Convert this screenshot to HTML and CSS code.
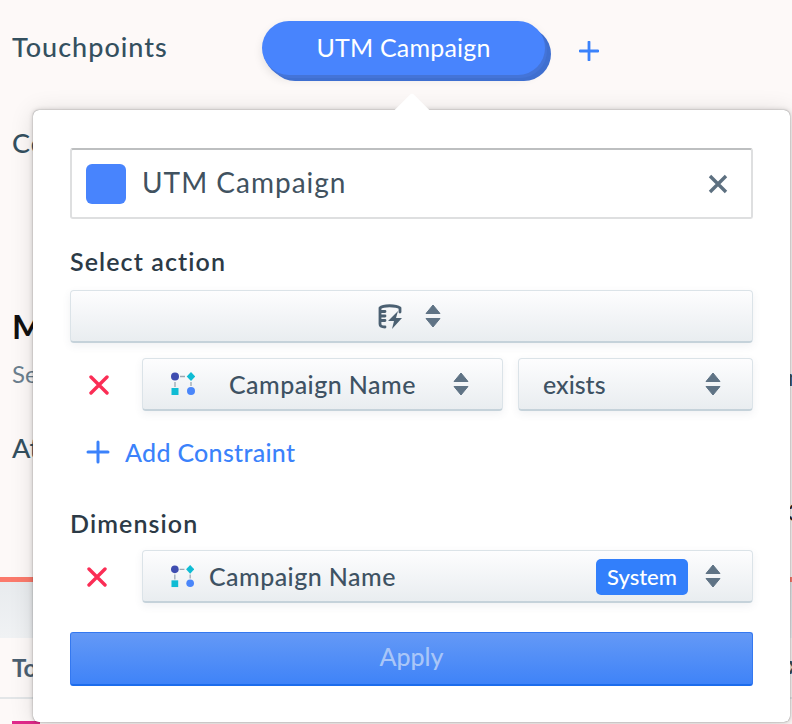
FILE: index.html
```html
<!DOCTYPE html>
<html lang="en">
    <head>
        <meta charset="UTF-8">
        <title>Touchpoints</title>
        <link rel="stylesheet" href="styles.css">
    </head>
    <body>
        <div class="page">
            <div class="top-row">
                <div class="row-label">Touchpoints</div>
                <div class="pill">UTM Campaign</div>
                <svg class="pill-plus" width="20" height="20" viewBox="0 0 20 20"><path d="M10 1v18M1 10h18" stroke="#3b82fb" stroke-width="2.8" stroke-linecap="round"/></svg>
            </div>

            <div class="back-text back-c">Co</div>
            <div class="back-text back-m">Me</div>
            <div class="back-text back-s">Se</div>
            <div class="back-text back-a">At</div>
            <div class="back-band"></div>
            <div class="back-text back-t">To</div>
            <div class="back-line"></div>
            <div class="back-pink"></div>
            <div class="back-text back-r1">n</div>
            <div class="back-text back-r2">3</div>
            <div class="back-text back-r3">x</div>
        </div>

        <div class="popover">
            <div class="popover-arrow"></div>

            <div class="name-box">
                <span class="swatch"></span>
                <span class="name-text">UTM Campaign</span>
                <svg class="name-close" width="20" height="20" viewBox="0 0 20 20"><path d="M2 2l16 16M18 2L2 18" stroke="#5d7080" stroke-width="3.400"/></svg>
            </div>

            <div class="section-title first">Select action</div>
            <div class="select select-center">
                <svg class="db-icon" width="24" height="25" viewBox="0 0 24 25" fill="none">
                    <path d="M2 4c3-3 16-3 20 0M2 4v16c0 2 2 3 5 3M7 7.500H2M7 12H2M7 16.500H2M22 4v4" stroke="#4b6072" stroke-width="2.800" stroke-linecap="round"/>
                    <path d="M20 7l-10 10h6l-2 8 10-11h-6l2-7z" fill="#4b6072"/>
                </svg>
                <svg class="updown" width="16" height="24" viewBox="0 0 16 24"><path d="M8 1l7 8.500H1zM1 14.500h14L8 23z" fill="#5f7385" stroke="#5f7385" stroke-linejoin="round"/></svg>
            </div>

            <div class="constraint-row">
                <span class="remove"><svg width="20" height="20" viewBox="0 0 20 20"><path d="M2 2l16 16M18 2L2 18" stroke="#fb2d55" stroke-width="3.400" stroke-linecap="round"/></svg></span>
                <div class="select field-select">
                    <svg class="node-icon" width="24" height="24" viewBox="0 0 24 24"><use href="#nodes"/></svg>
                    <span class="select-text wide-gap">Campaign Name</span>
                    <svg class="updown" width="16" height="24" viewBox="0 0 16 24"><path d="M8 1l7 8.500H1zM1 14.500h14L8 23z" fill="#5f7385" stroke="#5f7385" stroke-linejoin="round"/></svg>
                </div>
                <div class="select op-select">
                    <span class="select-text">exists</span>
                    <svg class="updown" width="16" height="24" viewBox="0 0 16 24"><path d="M8 1l7 8.500H1zM1 14.500h14L8 23z" fill="#5f7385" stroke="#5f7385" stroke-linejoin="round"/></svg>
                </div>
            </div>

            <div class="add-row">
                <svg width="24" height="24" viewBox="0 0 24 24"><path d="M12 2v20M2 12h20" stroke="#3b82fb" stroke-width="3" stroke-linecap="round"/></svg>
                <span>Add Constraint</span>
            </div>

            <div class="section-title">Dimension</div>
            <div class="constraint-row dimension-row">
                <span class="remove"><svg width="20" height="20" viewBox="0 0 20 20"><path d="M2 2l16 16M18 2L2 18" stroke="#fb2d55" stroke-width="3.400" stroke-linecap="round"/></svg></span>
                <div class="select dim-select">
                    <svg class="node-icon" width="23" height="23" viewBox="0 0 24 24"><use href="#nodes"/></svg>
                    <span class="select-text">Campaign Name</span>
                    <span class="tag">System</span>
                    <svg class="updown" width="16" height="24" viewBox="0 0 16 24"><path d="M8 1l7 8.500H1zM1 14.500h14L8 23z" fill="#5f7385" stroke="#5f7385" stroke-linejoin="round"/></svg>
                </div>
            </div>

            <button class="apply">Apply</button>
        </div>

        <svg width="0" height="0" class="defs">
            <defs>
                <g id="nodes">
                    <circle cx="4" cy="4.500" r="4" fill="#3f4db0"/>
                    <path d="M20 0l4.300 4.500-4.300 4.500-4.300-4.500z" fill="#0fbcd4"/>
                    <rect x="0.500" y="16" width="7" height="7" fill="#0fbcd4"/>
                    <circle cx="20" cy="19" r="4" fill="#4a86fa"/>
                    <path d="M9 4.500h5M4 15v-5M20 10v4" stroke="#9aa7b2" stroke-width="1.300"/>
                </g>
            </defs>
        </svg>
    </body>
</html>
```

FILE: styles.css
```css
* {
    margin: 0; padding: 0; box-sizing: border-box;
}

html, body {
    width: 100%;
    height: 100%;
    overflow: hidden;
    background-color: white;
    font-family: Lato, "Liberation Sans", sans-serif;
    color: #35495a;
}

.defs {
    position: absolute;
}

.page {
    height: 100%;
    padding: 21px 12px 0;
    background-color: #fdf9f8;
}

.top-row {
    display: flex;
    align-items: flex-start;
}

.row-label {
    width: 250px;
    padding-top: 9px;
    font-size: 27px;
    font-weight: 500;
    letter-spacing: 1px;
    color: #34505f;
}

.pill {
    width: 283px;
    height: 54px;
    border-radius: 27px;
    background-color: #4884fd;
    color: white;
    font-size: 25px;
    letter-spacing: 0.2px;
    line-height: 53px;
    text-align: center;
    box-shadow: 2px 3px 0 #4474d8, 6px 6px 0 #3f6fd0, 0 4px 10px rgba(0, 0, 0, 0.1);
}

.pill-plus {
    margin: 20px 0 0 34px;
}

.back-text {
    position: absolute;
    left: 12px;
    color: #34505f;
}

.back-c { top: 126px; font-size: 27px; font-weight: 500; letter-spacing: 0.9px; }
.back-m { top: 306px; font-size: 33px; font-weight: 700; color: #111; }
.back-s { top: 359px; font-size: 24px; color: #6b7f8e; }
.back-a { top: 431px; font-size: 27px; font-weight: 500; }
.back-t { top: 653px; font-size: 24px; font-weight: 700; color: #4b6072; }
.back-r1 { left: 788px; top: 362px; font-size: 24px; }
.back-r2 { left: 788px; top: 497px; font-size: 24px; color: #222; }
.back-r3 { left: 788px; top: 650px; font-size: 24px; font-weight: 700; }

.back-band {
    position: absolute;
    left: 0;
    right: 0;
    top: 577px;
    height: 61px;
    background: linear-gradient(#e8ebee, #f0f2f4);
    border-top: 5px solid #fb7a6c;
}

.back-line {
    position: absolute;
    left: 0;
    right: 0;
    top: 697px;
    height: 2px;
    background-color: #e3e6e8;
}

.back-pink {
    position: absolute;
    left: 12px;
    top: 721px;
    width: 28px;
    height: 3px;
    background-color: #e0298a;
}

.popover {
    position: absolute;
    left: 33px;
    top: 110px;
    width: 757px;
    height: 612px;
    padding: 38px 37px 0;
    background-color: white;
    border-radius: 6px;
    box-shadow: 0 0 1px rgba(0, 0, 0, 0.6), 0 0 5px rgba(0, 0, 0, 0.2), 0 2px 24px rgba(0, 0, 0, 0.12);
}

.popover-arrow {
    position: absolute;
    left: 366px;
    top: -12px;
    width: 26px;
    height: 26px;
    background-color: white;
    transform: rotate(45deg);
    border-radius: 3px 0 0 0;
}

.name-box {
    position: relative;
    display: flex;
    align-items: center;
    height: 71px;
    padding: 0 23px 0 14px;
    border: 2px solid #dedfe0;
    border-top-color: #bdbfc0;
    border-radius: 3px;
}

.swatch {
    width: 40px;
    height: 40px;
    background-color: #4884fd;
    border-radius: 6px;
}

.name-text {
    flex: 1;
    margin: 0 0 3px 16px;
    font-size: 28px;
    letter-spacing: 1px;
    color: #41525f;
}

.section-title {
    margin-top: 40px;
    font-size: 25px;
    font-weight: 600;
    letter-spacing: 1.1px;
    line-height: 30px;
    color: #2c3a46;
}

.section-title.first {
    margin-top: 27px;
}

.select-center {
    margin-top: 14px;
    justify-content: center;
    gap: 23px;
    padding-right: 4px;
}

.select {
    display: flex;
    align-items: center;
    height: 53px;
    background: linear-gradient(#fdfdfe, #e9edf0);
    border: 1px solid #dbe3e8;
    border-bottom: 2px solid #c5d2da;
    border-radius: 4px;
    box-shadow: 0 3px 8px rgba(60, 80, 100, 0.08);
}

.constraint-row {
    display: flex;
    align-items: center;
    gap: 15px;
    margin-top: 15px;
}

.dimension-row {
    margin-top: 12px;
}

.remove {
    display: flex;
    justify-content: center;
    width: 57px;
}

.dimension-row .remove {
    padding-right: 4px;
}

.field-select {
    width: 361px;
    padding: 0 33px 0 28px;
}

.op-select {
    width: 235px;
    padding: 0 31px 0 24px;
}

.op-select .select-text {
    letter-spacing: 0;
}

.dim-select {
    flex: 1;
    padding: 0 31px 0 28px;
}

.select-text {
    flex: 1;
    font-size: 25px;
    font-weight: 500;
    letter-spacing: 0.45px;
    color: #3e5263;
}

.dim-select .select-text {
    margin-left: 15px;
}

.wide-gap {
    margin-left: 34px;
}

.add-row {
    display: flex;
    align-items: center;
    gap: 15px;
    margin: 26px 0 41px 16px;
    font-size: 25px;
    font-weight: 500;
    letter-spacing: 0.3px;
    color: #3b82fb;
}

.add-row + .section-title {
    margin-top: 0;
}

.tag {
    width: 92px;
    height: 36px;
    margin: 2px 17px 0 0;
    background-color: #327ffb;
    border-radius: 5px;
    color: white;
    font-size: 22px;
    font-weight: 500;
    line-height: 35px;
    text-align: center;
}

.apply {
    display: block;
    width: 100%;
    height: 54px;
    margin-top: 29px;
    padding-bottom: 6px;
    background: linear-gradient(#6499f6, #3f83f8);
    border: 1px solid #3478f0;
    border-bottom: 2px solid #1c6cec;
    border-radius: 3px;
    color: #a9c6f8;
    font-family: Lato, sans-serif;
    font-size: 25px;
    font-weight: 500;
}
```
